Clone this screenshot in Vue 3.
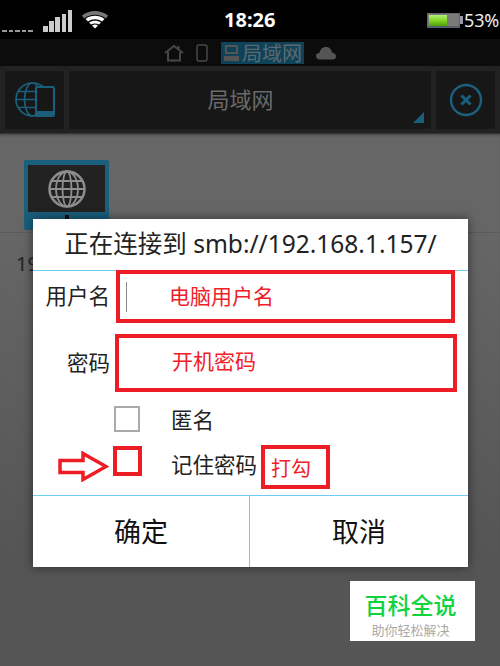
<template>
  <div class="screen">
    <div class="status-bar">
      <div class="status-left">
        <div class="carrier"><i v-for="n in 5" :key="n"></i></div>
        <div class="signal"><i v-for="h in signalBars" :key="h" :style="{ height: h + 'px' }"></i></div>
        <svg class="wifi" width="28" height="20" viewBox="0 0 28 20">
          <path d="M1 6.500C8.500 0.500 19.500 0.500 27 6.500L25 9.500C18 4.500 10 4.500 3 9.500Z" fill="#777" />
          <path d="M4.500 10C10 5.800 18 5.800 23.500 10L21 12.500C16.500 9.500 11.500 9.500 7 12.500Z" fill="#fff" />
          <path d="M8 13.500C11.500 11 16.500 11 20 13.500L18 15.500C15.500 14 12.500 14 10 15.500Z" fill="#fff" />
          <path d="M11 16.500C13 15.300 15 15.300 17 16.500L14 19.500Z" fill="#fff" />
        </svg>
      </div>
      <div class="clock">18:26</div>
      <div class="status-right">
        <div class="battery">
          <div class="battery-level"></div>
        </div>
        <div class="battery-tip"></div>
        <span class="percent">53%</span>
      </div>
    </div>

    <div class="tabs">
      <svg width="20" height="18" viewBox="0 0 20 18" fill="none" stroke="#474747" stroke-width="2">
        <path d="M1 9L10 2L19 9M4 8V16.500H16V8M14.500 5V2" />
      </svg>
      <svg class="tab-phone" width="12" height="18" viewBox="0 0 12 18" fill="none" stroke="#474747" stroke-width="1.500">
        <rect x="1" y="1" width="10" height="16" rx="2" />
      </svg>
      <div class="tab-active">
        <svg width="17" height="18" viewBox="0 0 17 18" fill="#555">
          <path d="M2 1H15V10H2ZM4 3V8H13V3Z" fill-rule="evenodd" />
          <rect x="1" y="12" width="15" height="5" />
        </svg>
        <span>局域网</span>
      </div>
      <svg width="20" height="14" viewBox="0 0 20 14" fill="#555">
        <path d="M4 13.500C1.500 13.500 0 12 0 10C0 8 1.500 7 3.500 7C4 3 7 1 10 1C13 1 15.500 3 16 6.500C18.500 7 20 8.500 20 10.500C20 12.500 18.500 13.500 17 13.500Z" />
      </svg>
    </div>

    <div class="toolbar">
      <div class="tool-btn">
        <svg width="40" height="36" viewBox="0 0 40 36" fill="none" stroke="#1a5f7c" stroke-width="1.700">
          <circle cx="17.500" cy="17.500" r="16.500" />
          <ellipse cx="17.500" cy="17.500" rx="8" ry="16.500" />
          <path d="M1 17.500H34M3 9.500H32M3 25.500H32" />
          <rect x="21" y="5" width="18" height="29" rx="1" fill="#171717" stroke-width="2" />
          <rect x="21" y="29" width="18" height="5" fill="#1a5f7c" stroke="none" />
        </svg>
      </div>
      <div class="tool-title">
        局域网
        <span class="corner"></span>
      </div>
      <div class="tool-btn">
        <svg width="34" height="34" viewBox="0 0 34 34" fill="none" stroke="#1a5f7c">
          <circle cx="17" cy="17" r="15" stroke-width="2.500" />
          <path d="M12.500 12.500L21.500 21.500M21.500 12.500L12.500 21.500" stroke-width="3" />
        </svg>
      </div>
    </div>

    <div class="content">
      <div class="server">
        <div class="monitor">
          <svg width="38" height="38" viewBox="0 0 38 38" fill="none" stroke="#8e8e8e" stroke-width="1.800">
            <circle cx="19" cy="19" r="17.500" stroke-width="2.500" />
            <ellipse cx="19" cy="19" rx="11" ry="17.500" />
            <ellipse cx="19" cy="19" rx="4.500" ry="17.500" />
            <path d="M3 11H35M1.500 19H36.500M3 27H35" />
          </svg>
        </div>
        <div class="monitor-dot"></div>
      </div>
      <div class="server-row"></div>
      <!-- only the start of the address shows beside the dialog -->
      <div class="server-ip">19</div>

      <div class="dialog">
        <div class="dialog-title">正在连接到 smb://192.168.1.157/</div>
        <div class="form">
          <div class="field user-field">
            <label>用户名</label>
            <div class="red-box user-box">
              <i class="cursor"></i>
              <span class="red-text">电脑用户名</span>
            </div>
          </div>
          <div class="field pass-field">
            <label>密码</label>
            <div class="red-box pass-box">
              <span class="red-text">开机密码</span>
            </div>
          </div>
          <div class="check-row anon-row">
            <div class="check"></div>
            <span>匿名</span>
          </div>
          <div class="check-row remember-row">
            <svg class="arrow" width="51" height="31" viewBox="0 0 51 31" fill="#fff" stroke="#ee1c25" stroke-width="3.500">
              <path d="M2 9.500H25V2.500L48 15.500L25 28.500V21.500H2Z" />
            </svg>
            <div class="check check-red"></div>
            <span>记住密码</span>
            <div class="tick-note">打勾</div>
          </div>
        </div>
        <div class="dialog-actions">
          <div class="action">确定</div>
          <div class="action">取消</div>
        </div>
      </div>

      <div class="watermark">
        <div class="mark-title">百科全说</div>
        <div class="mark-sub">助你轻松解决</div>
      </div>
    </div>
  </div>
</template>

<script setup>
const signalBars = [6, 11, 15, 18, 22];
</script>

<style>
html,
body {
  margin: 0;
  background: #555;
}
</style>

<style scoped>
.screen {
  width: 500px;
  height: 666px;
  display: flex;
  flex-direction: column;
  overflow: hidden;
  font-family: "Noto Sans", "Noto Sans CJK SC", sans-serif;
}

.status-bar {
  height: 39px;
  background: #000;
  display: flex;
  align-items: center;
  justify-content: space-between;
  position: relative;
  flex: none;
}

.status-left {
  display: flex;
  align-items: flex-end;
  padding: 0 0 7px 2px;
  height: 32px;
  box-sizing: border-box;
  margin-top: 7px;
}

.carrier {
  display: flex;
  gap: 2px;
  width: 31px;
}

.carrier i {
  width: 4.500px;
  height: 2px;
  background: #999;
}

.signal {
  display: flex;
  align-items: flex-end;
  gap: 1.500px;
  margin-left: 10px;
}

.signal i {
  width: 4.700px;
  background: #ccc;
}

.wifi {
  margin: 0 0 3px 9px;
}

.clock {
  position: absolute;
  left: 224px;
  top: 6px;
  color: #fff;
  font-size: 20px;
  font-weight: 700;
  line-height: 28px;
}

.status-right {
  display: flex;
  align-items: center;
  padding-top: 1px;
}

.battery {
  width: 33px;
  height: 15px;
  background: #7a7a7a;
  border: 1px solid #666;
  border-bottom: 2px solid #56606c;
  padding: 1px 0 0 1px;
  box-sizing: border-box;
}

.battery-level {
  width: 18px;
  height: 11px;
  background: linear-gradient(#b4ef7c, #7dd21f 55%, #4f9e0e);
}

.battery-tip {
  width: 3px;
  height: 8px;
  background: #99a;
}

.percent {
  color: #eee;
  font-size: 18px;
  margin-left: 1px;
  padding-right: 1px;
  letter-spacing: -0.200px;
}

.tabs {
  height: 27px;
  background: #0c0c0c;
  flex: none;
  display: flex;
  align-items: center;
  justify-content: center;
  gap: 12px;
}

.tab-active {
  height: 22px;
  background: #0e4258;
  display: flex;
  align-items: center;
  padding: 0 2px;
  gap: 2px;
  margin-left: 1px;
  color: #5d6a70;
  font-size: 20px;
}

.toolbar {
  height: 68px;
  background: #222;
  border-bottom: 1px solid #333;
  box-sizing: border-box;
  padding: 5px 5px 4px;
  display: flex;
  gap: 5px;
  flex: none;
}

.tool-btn {
  width: 59px;
  background: #171717;
  border-radius: 2px;
  display: flex;
  align-items: center;
  justify-content: center;
  flex: none;
}

.tool-title {
  flex: 1;
  background: #171717;
  border-radius: 2px;
  position: relative;
  display: flex;
  align-items: center;
  justify-content: center;
  box-sizing: border-box;
  padding: 0 19px 4px 0;
  color: #6a6a6a;
  font-size: 22px;
}

.corner {
  position: absolute;
  right: 7px;
  bottom: 6px;
  border-left: 11px solid transparent;
  border-bottom: 11px solid #1a5f7c;
}

.content {
  flex: 1;
  position: relative;
  background: linear-gradient(#666 0, #666 100px, #555 420px);
  box-shadow: inset 0 3px 3px -2px #444;
}

.server {
  position: absolute;
  left: 24px;
  top: 26px;
  width: 85px;
  height: 70px;
  background: #1a5f7c;
  border-radius: 2px;
  padding: 5px 4px 0;
  box-sizing: border-box;
}

.monitor {
  height: 47px;
  background: #222;
  display: flex;
  align-items: center;
  justify-content: center;
}

.monitor-dot {
  width: 4px;
  height: 4px;
  margin: 3px auto 0;
  background: #111;
}

.server-row {
  position: absolute;
  left: 0;
  right: 0;
  top: 98px;
  height: 1px;
  background: #5b5b5b;
}

.server-ip {
  position: absolute;
  left: 16px;
  top: 116px;
  color: #222;
  font-size: 20px;
}

.dialog {
  position: absolute;
  left: 33px;
  top: 85px;
  width: 435px;
  height: 348px;
  background: #fff;
  box-shadow: 0 0 10px rgba(0, 0, 0, 0.500);
  display: flex;
  flex-direction: column;
  color: #222;
}

.dialog-title {
  height: 52px;
  flex: none;
  box-sizing: border-box;
  padding-bottom: 5px;
  display: flex;
  align-items: center;
  justify-content: center;
  font-size: 24.500px;
  border-bottom: 1px solid #6fcdf0;
}

.form {
  flex: 1;
  position: relative;
}

.field {
  display: flex;
  align-items: center;
}

.field label {
  width: 77px;
  text-align: right;
  font-size: 21.500px;
  flex: none;
  padding-bottom: 4px;
}

.red-box {
  border: 4px solid #ee1c25;
  box-sizing: border-box;
  position: relative;
  display: flex;
  align-items: center;
}

.user-field {
  margin-top: -1px;
  height: 53px;
}

.user-box {
  margin-left: 6px;
  width: 339px;
  height: 53px;
  padding: 0 0 4px 49px;
}

.cursor {
  position: absolute;
  left: 6px;
  top: 8px;
  width: 1px;
  height: 30px;
  background: #888;
}

.red-text {
  color: #f0202a;
  font-size: 21px;
}

.pass-field {
  margin-top: 11px;
  height: 58px;
}

.pass-box {
  margin-left: 5px;
  width: 342px;
  height: 58px;
  padding: 0 0 7px 53px;
}

.check-row {
  display: flex;
  align-items: center;
  font-size: 21.500px;
  position: relative;
}

.check {
  width: 26px;
  height: 26px;
  border: 2px solid #aaa;
  box-sizing: border-box;
  flex: none;
}

.anon-row {
  margin-top: 14px;
  padding-left: 81px;
  height: 26px;
}

.anon-row span {
  margin: 0 0 2px 31px;
}

.remember-row {
  margin-top: 14px;
  padding-left: 80px;
  height: 30px;
}

.check-red {
  width: 29px;
  height: 30px;
  border: 4px solid #ee1c25;
}

.remember-row span {
  margin-left: 29px;
  margin-top: 4px;
}

.arrow {
  position: absolute;
  left: 25px;
  top: 5px;
}

.tick-note {
  position: absolute;
  left: 228px;
  top: -1px;
  width: 69px;
  height: 44px;
  border: 4px solid #ee1c25;
  box-sizing: border-box;
  color: #f0202a;
  font-size: 20px;
  padding-left: 6px;
  line-height: 40px;
}

.dialog-actions {
  height: 72px;
  flex: none;
  border-top: 1px solid #6fcdf0;
  box-sizing: border-box;
  display: flex;
}

.action {
  flex: 1;
  display: flex;
  align-items: center;
  justify-content: center;
  box-sizing: border-box;
  padding-bottom: 2px;
  font-size: 27px;
  color: #111;
}

.action:first-child {
  flex: none;
  width: 216px;
}

.action + .action {
  border-left: 1px solid #6fcdf0;
}

.watermark {
  position: absolute;
  left: 350px;
  top: 447px;
  width: 125px;
  height: 60px;
  background: #fff;
  box-sizing: border-box;
  padding-right: 4px;
  display: flex;
  flex-direction: column;
  align-items: center;
}

.mark-title {
  color: #0fd43f;
  font-size: 23px;
  font-weight: 500;
  line-height: 28px;
  margin-top: 10px;
}

.mark-sub {
  color: #aaa;
  font-size: 13px;
  line-height: 16px;
  margin-top: 3px;
}
</style>
